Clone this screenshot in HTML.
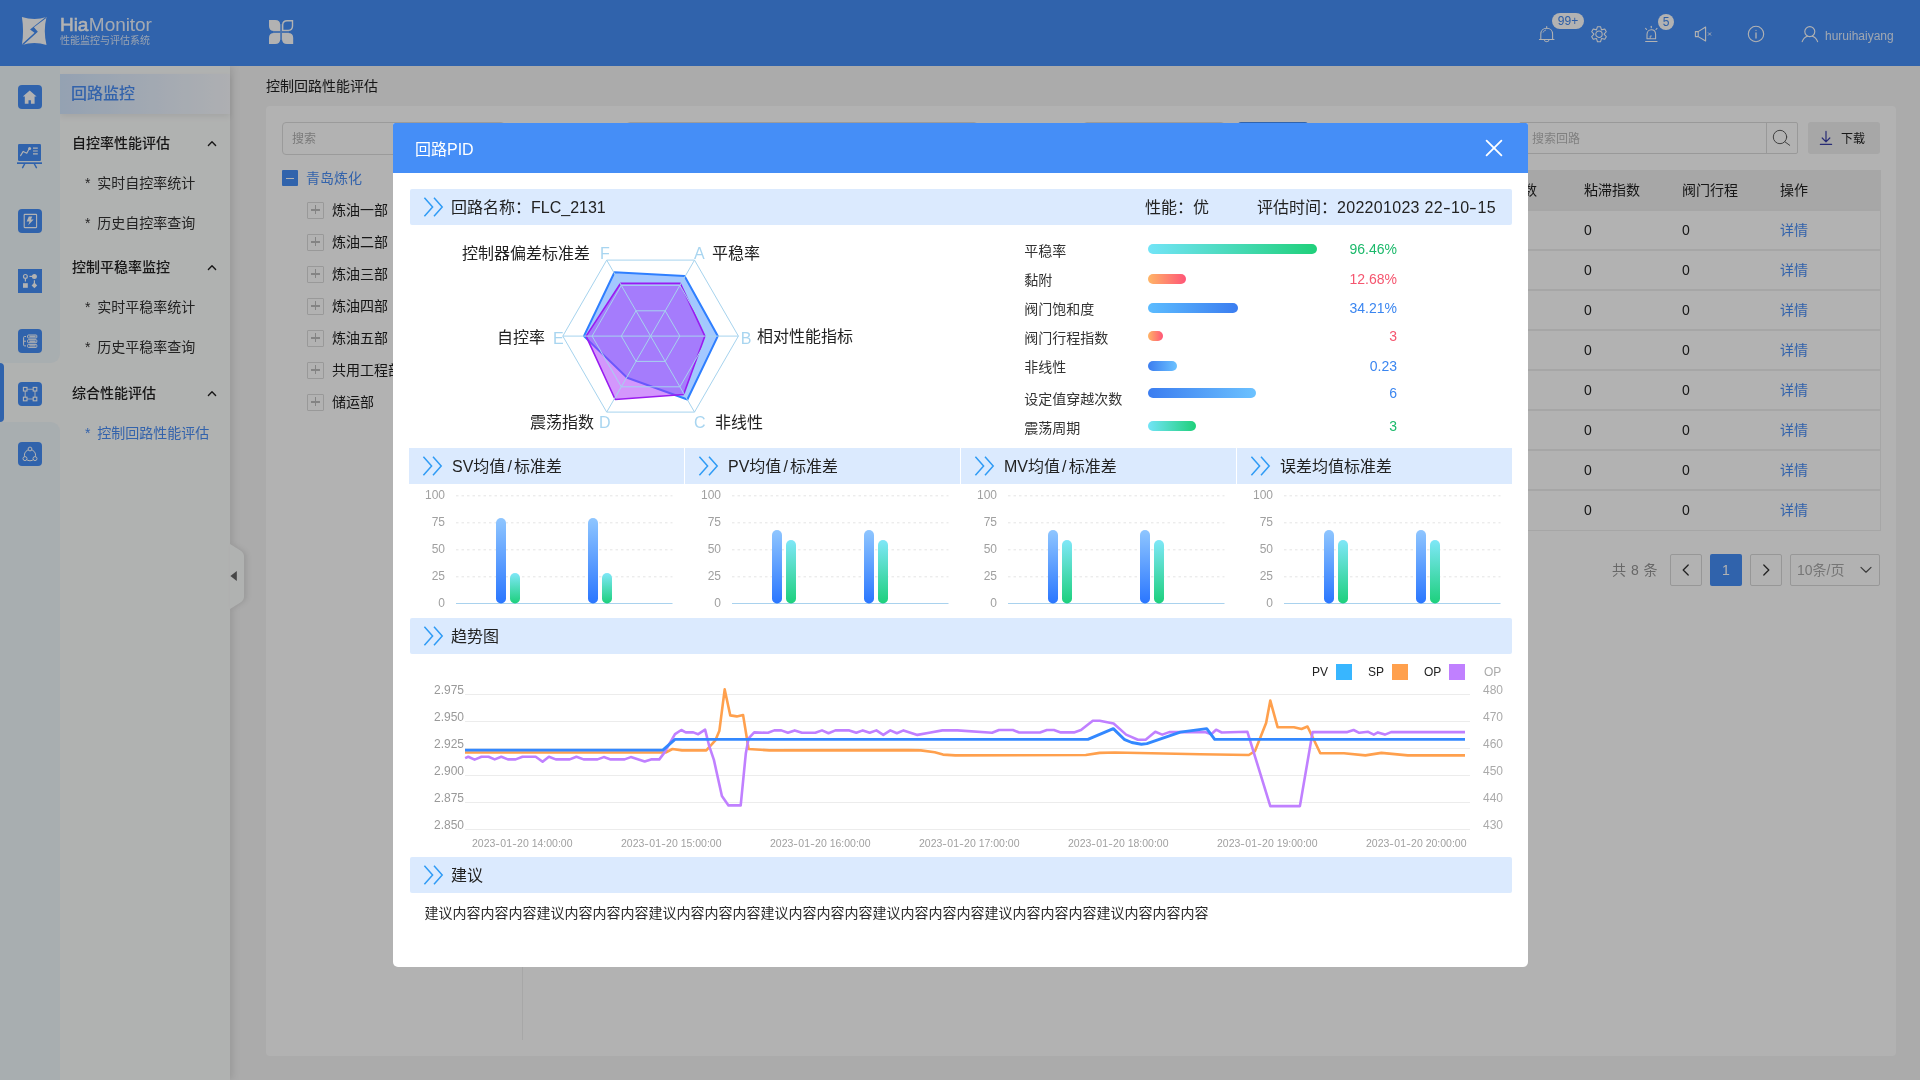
<!DOCTYPE html>
<html lang="zh-CN"><head><meta charset="utf-8"><title>HiaMonitor 控制回路性能评估</title><style>
*{box-sizing:border-box;margin:0;padding:0}
html,body{width:1920px;height:1080px;overflow:hidden;background:#f5f5f5;font-family:"Liberation Sans","Noto Sans CJK SC",sans-serif;}
#root{position:relative;width:1920px;height:1080px;overflow:hidden;background:#f5f5f5}
.t{position:absolute;white-space:nowrap}
.b{position:absolute}
svg{position:absolute;overflow:visible}
#root{will-change:transform}
#mask{position:absolute;left:0;top:0;width:1920px;height:1080px;background:rgba(0,0,0,0.3)}
</style></head><body><div id="root">
<div class="b" style="left:0px;top:0px;width:1920px;height:66px;background:#458ef7;"></div>
<svg style="left:22px;top:17px" width="25" height="29" viewBox="0 0 25 29">
<path d="M-0.1 -0.1 Q12.2 3.9 24.5 0.1 Q21.1 14 24.5 28 Q12.2 23.8 -0.1 28.1 Q2.2 14 -0.1 -0.1 Z" fill="#ffffff"/>
<path d="M23.7 -0.1 L8.05 12.5 L12.5 15.85 L-0.1 27.3 L0.9 28.2 L15.85 14.65 L11.95 10.15 L24.6 0.8 Z" fill="#458ef7"/>
</svg>
<div class="t" style="left:60px;top:13.1px;font-size:19px;line-height:24px;color:#fff;letter-spacing:-0.05px"><span style="-webkit-text-stroke:0.55px #fff">Hia</span><span style="opacity:.9;margin-left:0.5px">Monitor</span></div>
<div class="t " style="top:34.2px;font-size:10px;line-height:14px;color:rgba(255,255,255,.8);left:60.0px;">性能监控与评估系统</div>
<svg style="left:269px;top:20px" width="24" height="24" viewBox="0 0 24 24"><path d="M0 0 H6.199999999999999 Q11.2 0 11.2 5 V11 H5 Q0 11 0 6 V0 Z" fill="#fff"/><path d="M5 13 H11.2 V19 Q11.2 24 6.199999999999999 24 H0 V18 Q0 13 5 13 Z" fill="#fff"/><path d="M13 13 H19.2 Q24.2 13 24.2 18 V24 H18 Q13 24 13 19 V13 Z" fill="#fff"/><path d="M18.1 0.7 H23.5 V5.999999999999998 Q23.5 10.399999999999999 19.1 10.399999999999999 H13.7 V5.1000000000000005 Q13.7 0.7 18.1 0.7 Z" fill="none" stroke="#fff" stroke-width="1.4"/><path d="M4 12 H20 M12.1 4 V20" stroke="rgba(255,255,255,.22)" stroke-width="2"/></svg>
<svg style="left:1538px;top:25px" width="18" height="18" viewBox="0 0 18 18" fill="none" stroke="#fff" stroke-width="1.05" stroke-linecap="round" stroke-linejoin="round">
<path d="M2.8 14.3 V9.2 C2.8 5.6 5.4 3.2 8.7 3.2 C12 3.2 14.6 5.6 14.6 9.2 V14.3"/>
<path d="M1.4 14.4 H16"/>
<path d="M8.7 1.4 V3.1"/>
<path d="M6.4 15 C6.8 17.3 10.6 17.3 11 15"/>
<path d="M5.2 7.2 C5.7 6 6.6 5.4 7.6 5.1" stroke-width="0.9"/>
</svg>
<div class="b" style="left:1552px;top:13px;width:32px;height:16px;background:#fff;border-radius:8px;"></div>
<div class="t " style="top:13.0px;font-size:12px;line-height:16px;color:#3f86ee;left:0.0px;left:1552px;width:32px;text-align:center;">99+</div>
<svg style="left:1591.4px;top:25.8px" width="16" height="17" viewBox="0 0 16 17" fill="none" stroke="#fff" stroke-width="1.05" stroke-linejoin="round">
<path d="M6.46 0.65 L9.54 0.65 L10.50 3.87 L13.77 3.10 L15.30 5.76 L13.00 8.20 L15.30 10.64 L13.77 13.30 L10.50 12.53 L9.54 15.75 L6.46 15.75 L5.50 12.53 L2.23 13.30 L0.70 10.64 L3.00 8.20 L0.70 5.76 L2.23 3.10 L5.50 3.87 Z"/><circle cx="8" cy="8.2" r="3.2"/></svg>
<svg style="left:1643px;top:25px" width="18" height="18" viewBox="0 0 18 18" fill="none" stroke="#fff" stroke-width="1.1" stroke-linecap="round" stroke-linejoin="round">
<path d="M4 13.8 V9.6 C4 6.8 5.8 4.8 8.3 4.8 C10.8 4.8 12.6 6.8 12.6 9.6 V13.8 Z"/>
<path d="M2.6 16.5 H14"/>
<path d="M8.3 1.2 V2.8"/><path d="M2.6 3.4 L3.6 4.5"/><path d="M14 3.4 L13 4.5"/>
<path d="M7.2 13.4 V11 H8.4" stroke-width="0.9"/>
</svg>
<div class="b" style="left:1658px;top:14px;width:16px;height:16px;background:#fff;border-radius:8px;"></div>
<div class="t " style="top:14.0px;font-size:12px;line-height:16px;color:#3f86ee;left:0.0px;left:1658px;width:16px;text-align:center;">5</div>
<svg style="left:1694px;top:26px" width="19" height="16" viewBox="0 0 19 16" fill="none" stroke="#fff" stroke-width="1.1" stroke-linejoin="round" stroke-linecap="round">
<path d="M1.4 5.6 H4.2 V10.6 H1.4 Z"/>
<path d="M4.2 5.6 L11.6 1 V15 L4.2 10.6"/>
<path d="M14.4 6.8 L16.8 9.2 M16.8 6.8 L14.4 9.2" stroke-width="0.9"/>
</svg>
<svg style="left:1747px;top:25px" width="18" height="18" viewBox="0 0 18 18" fill="none" stroke="#fff" stroke-width="1.1" stroke-linecap="round">
<circle cx="9" cy="9" r="7.7"/><path d="M9 8 V13" stroke-width="1.3"/><circle cx="9" cy="5.3" r="0.6" fill="#fff" stroke="none"/>
</svg>
<svg style="left:1801px;top:25px" width="18" height="18" viewBox="0 0 18 18" fill="none" stroke="#fff" stroke-width="1.15" stroke-linecap="round">
<circle cx="8.8" cy="6.6" r="5"/><path d="M1.2 16.6 C2.4 13.4 4.6 11.8 6.4 11.2 M16.6 16.6 C15.4 13.4 13.2 11.8 11.4 11.2"/>
</svg>
<div class="t " style="top:28.4px;font-size:12px;line-height:16px;color:rgba(255,255,255,.85);left:1825.0px;">huruihaiyang</div>
<div class="b" style="left:60px;top:66px;width:170px;height:1014px;background:#fdfffe;box-shadow:2px 0 8px rgba(0,0,0,.12);clip-path:inset(0 -20px 0 0);"></div>
<div class="b" style="left:60px;top:74px;width:170px;height:40px;background:linear-gradient(90deg,#d5e8ff 0%,#f9fbff 100%);box-shadow:0 3px 6px rgba(0,0,0,.07);"></div>
<div class="t " style="top:82.5px;font-size:16px;line-height:22px;color:#4a8ef5;font-weight:500;left:71.0px;">回路监控</div>
<div class="t " style="top:133.0px;font-size:14px;line-height:20px;color:#222;font-weight:500;left:72.0px;">自控率性能评估</div>
<svg style="left:207px;top:139.5px" width="10" height="7" viewBox="0 0 10 7"><path d="M1.4 5.4 L5 1.8 L8.6 5.4" fill="none" stroke="#222" stroke-width="1.4" stroke-linecap="round" stroke-linejoin="round"/></svg>
<div class="t " style="top:257.0px;font-size:14px;line-height:20px;color:#222;font-weight:500;left:72.0px;">控制平稳率监控</div>
<svg style="left:207px;top:263.5px" width="10" height="7" viewBox="0 0 10 7"><path d="M1.4 5.4 L5 1.8 L8.6 5.4" fill="none" stroke="#222" stroke-width="1.4" stroke-linecap="round" stroke-linejoin="round"/></svg>
<div class="t " style="top:383.0px;font-size:14px;line-height:20px;color:#222;font-weight:500;left:72.0px;">综合性能评估</div>
<svg style="left:207px;top:389.5px" width="10" height="7" viewBox="0 0 10 7"><path d="M1.4 5.4 L5 1.8 L8.6 5.4" fill="none" stroke="#222" stroke-width="1.4" stroke-linecap="round" stroke-linejoin="round"/></svg>
<div class="t " style="top:173.0px;font-size:14px;line-height:20px;color:#333;left:85.0px;word-spacing:2.8px;">* 实时自控率统计</div>
<div class="t " style="top:213.0px;font-size:14px;line-height:20px;color:#333;left:85.0px;word-spacing:2.8px;">* 历史自控率查询</div>
<div class="t " style="top:297.0px;font-size:14px;line-height:20px;color:#333;left:85.0px;word-spacing:2.8px;">* 实时平稳率统计</div>
<div class="t " style="top:337.0px;font-size:14px;line-height:20px;color:#333;left:85.0px;word-spacing:2.8px;">* 历史平稳率查询</div>
<div class="t " style="top:423.0px;font-size:14px;line-height:20px;color:#4a8ef5;left:85.0px;word-spacing:2.8px;">* 控制回路性能评估</div>
<svg style="left:230px;top:544px;filter:drop-shadow(3px 0 2.5px rgba(0,0,0,.09))" width="16" height="66" viewBox="0 0 16 66"><path d="M0 0 L10 6.2 Q14 8.6 14 12.5 V52.5 Q14 56.4 10 58.8 L0 65 Z" fill="#fdfffe"/><path d="M6.8 27 V37 L0.4 32 Z" fill="#666"/></svg>
<div class="b" style="left:0px;top:66px;width:60px;height:1014px;background:#fdfffe;"></div>
<div class="b" style="left:0px;top:66px;width:60px;height:297px;background:#f1f9fd;border-bottom-right-radius:9px;"></div>
<div class="b" style="left:0px;top:422px;width:60px;height:658px;background:#f1f9fd;border-top-right-radius:9px;"></div>
<div class="b" style="left:0px;top:363px;width:60px;height:59px;background:#fdfffe;"></div>
<div class="b" style="left:0px;top:363px;width:4px;height:59px;background:#458ef7;border-radius:0 4px 4px 0;"></div>
<div class="b" style="left:18px;top:85px;width:24px;height:24px;background:#458ef7;border-radius:4px;"></div>
<svg style="left:18px;top:85px" width="24" height="24" viewBox="0 0 24 24"><path d="M11.7 5.6 L18.6 11.6 H16.6 V18.8 H12.9 V15.2 H10.5 V18.8 H6.8 V11.6 H4.8 Z" fill="#fff"/></svg>
<svg style="left:16px;top:142px" width="28" height="28" viewBox="0 0 28 28">
<rect x="2" y="2" width="23" height="17" rx="1.2" fill="#458ef7"/>
<rect x="1" y="20.3" width="25" height="1.7" fill="#458ef7"/>
<path d="M8.6 22 L6.6 25.6 M18.4 22 L20.4 25.6" stroke="#458ef7" stroke-width="1.5" stroke-linecap="round"/>
<path d="M4.6 13.6 L7.2 9.4 L10.8 11.2 L13.2 6.8" stroke="#fff" stroke-width="1.1" fill="none" stroke-linecap="round" stroke-linejoin="round"/>
<circle cx="13.6" cy="6.4" r="1.5" fill="#fff"/>
<path d="M17 6.2 H21.8 M17 9 H21.8 M17 11.8 H21.8" stroke="#fff" stroke-width="1.2"/>
</svg>
<div class="b" style="left:18px;top:209px;width:24px;height:24px;background:#458ef7;border-radius:4px;"></div>
<svg style="left:18px;top:209px" width="24" height="24" viewBox="0 0 24 24"><rect x="6.2" y="5.4" width="12.4" height="13.2" rx="0.6" fill="none" stroke="#fff" stroke-width="1.1"/>
<path d="M10.8 7.4 L8.6 12.5 H11.5 L10.2 16.3 L15.7 10.6 H12.9 L14.3 7.4 Z" fill="#fff"/></svg>
<div class="b" style="left:18px;top:269px;width:24px;height:24px;background:#458ef7;border-radius:0px;"></div>
<svg style="left:18px;top:269px" width="24" height="24" viewBox="0 0 24 24" fill="#fff">
<circle cx="7.4" cy="7.4" r="1.9" fill="none" stroke="#fff" stroke-width="1.2"/>
<path d="M7.4 9.4 V12.4" stroke="#fff" stroke-width="1.2"/>
<rect x="5" y="14.2" width="4.8" height="4.6"/>
<circle cx="16.4" cy="7.4" r="2.5"/>
<path d="M11.4 7.4 H15" stroke="#fff" stroke-width="1.2"/>
<path d="M16.4 11.2 V15" stroke="#fff" stroke-width="1.2"/>
<path d="M16.4 13.6 L19.2 16.4 L16.4 19.2 L13.6 16.4 Z"/>
</svg>
<div class="b" style="left:18px;top:329px;width:24px;height:24px;background:#458ef7;border-radius:4px;"></div>
<svg style="left:18px;top:329px" width="24" height="24" viewBox="0 0 24 24" fill="none" stroke="#fff" stroke-width="1">
<rect x="9.6" y="6" width="9.2" height="3" rx="0.8"/><rect x="9.6" y="10.7" width="9.2" height="3" rx="0.8"/><rect x="9.6" y="15.4" width="9.2" height="3" rx="0.8"/>
<path d="M11.4 7.5 H17.6 M11.4 12.2 H17.6 M11.4 16.9 H17.6" stroke-width="1.4" opacity=".85"/>
<path d="M8 7.5 H6.6 Q5.6 7.5 5.6 8.5 V15.9 Q5.6 16.9 6.6 16.9 H8 M5.6 12.2 H8"/>
</svg>
<div class="b" style="left:18px;top:382px;width:24px;height:24px;background:#458ef7;border-radius:4px;"></div>
<svg style="left:18px;top:382px" width="24" height="24" viewBox="0 0 24 24" fill="none" stroke="#fff" stroke-width="1.1">
<rect x="5.4" y="5.4" width="3.6" height="3.6"/><rect x="15.2" y="5.4" width="3.6" height="3.6"/><rect x="5.4" y="15.2" width="3.6" height="3.6"/><rect x="15.2" y="15.2" width="3.6" height="3.6"/>
<path d="M9 7.2 H15.2 M9 17 H15.2 M7.2 9 V15.2 M17 9 V15.2" opacity=".8"/>
</svg>
<div class="b" style="left:18px;top:442px;width:24px;height:24px;background:#458ef7;border-radius:4px;"></div>
<svg style="left:18px;top:442px" width="24" height="24" viewBox="0 0 24 24" fill="none" stroke="#fff" stroke-width="1">
<circle cx="12" cy="13.2" r="5.6"/><circle cx="12" cy="7" r="1.9" fill="#458ef7"/><circle cx="7" cy="16.6" r="2" fill="#458ef7"/><circle cx="17" cy="16.6" r="2" fill="#458ef7"/>
</svg>
<div class="t " style="top:76.0px;font-size:14px;line-height:20px;color:#222;left:266.0px;">控制回路性能评估</div>
<div class="b" style="left:266px;top:106px;width:1630px;height:950px;background:#fff;border-radius:4px;"></div>
<div class="b" style="left:281.5px;top:121.5px;width:223px;height:33px;border:1.5px solid #dedede;border-radius:4px;background:#fff;"></div>
<div class="t " style="top:131.2px;font-size:12px;line-height:16px;color:#b0b0b0;left:292.0px;">搜索</div>
<div class="b" style="left:626px;top:121.5px;width:352px;height:33px;border:1.5px solid #dedede;border-radius:4px;"></div>
<div class="b" style="left:1083px;top:121.5px;width:142px;height:33px;border:1.5px solid #dedede;border-radius:4px;"></div>
<div class="b" style="left:1238px;top:122px;width:70px;height:32px;background:#458ef7;border-radius:3px;"></div>
<div class="b" style="left:522px;top:170px;width:1px;height:870px;background:#f0f0f0;"></div>
<div class="b" style="left:282px;top:170px;width:16px;height:16px;background:#458ef7;border-radius:1px;"></div>
<div class="b" style="left:286px;top:177.5px;width:8px;height:1.2px;background:#fff;"></div>
<div class="t " style="top:168.0px;font-size:14px;line-height:20px;color:#4a8ef5;left:306.0px;">青岛炼化</div>
<div class="b" style="left:307px;top:201.5px;width:17px;height:17px;border:1.3px solid #dcdcdc;border-radius:1px;background:#fff;"></div>
<div class="b" style="left:311.4px;top:209.4px;width:8.4px;height:1.2px;background:#bdbdbd;"></div>
<div class="b" style="left:315px;top:205.4px;width:1.2px;height:8.4px;background:#bdbdbd;"></div>
<div class="t " style="top:200.0px;font-size:14px;line-height:20px;color:#222;left:332.0px;">炼油一部</div>
<div class="b" style="left:307px;top:233.5px;width:17px;height:17px;border:1.3px solid #dcdcdc;border-radius:1px;background:#fff;"></div>
<div class="b" style="left:311.4px;top:241.4px;width:8.4px;height:1.2px;background:#bdbdbd;"></div>
<div class="b" style="left:315px;top:237.4px;width:1.2px;height:8.4px;background:#bdbdbd;"></div>
<div class="t " style="top:232.0px;font-size:14px;line-height:20px;color:#222;left:332.0px;">炼油二部</div>
<div class="b" style="left:307px;top:265.5px;width:17px;height:17px;border:1.3px solid #dcdcdc;border-radius:1px;background:#fff;"></div>
<div class="b" style="left:311.4px;top:273.4px;width:8.4px;height:1.2px;background:#bdbdbd;"></div>
<div class="b" style="left:315px;top:269.4px;width:1.2px;height:8.4px;background:#bdbdbd;"></div>
<div class="t " style="top:264.0px;font-size:14px;line-height:20px;color:#222;left:332.0px;">炼油三部</div>
<div class="b" style="left:307px;top:297.5px;width:17px;height:17px;border:1.3px solid #dcdcdc;border-radius:1px;background:#fff;"></div>
<div class="b" style="left:311.4px;top:305.4px;width:8.4px;height:1.2px;background:#bdbdbd;"></div>
<div class="b" style="left:315px;top:301.4px;width:1.2px;height:8.4px;background:#bdbdbd;"></div>
<div class="t " style="top:296.0px;font-size:14px;line-height:20px;color:#222;left:332.0px;">炼油四部</div>
<div class="b" style="left:307px;top:329.5px;width:17px;height:17px;border:1.3px solid #dcdcdc;border-radius:1px;background:#fff;"></div>
<div class="b" style="left:311.4px;top:337.4px;width:8.4px;height:1.2px;background:#bdbdbd;"></div>
<div class="b" style="left:315px;top:333.4px;width:1.2px;height:8.4px;background:#bdbdbd;"></div>
<div class="t " style="top:328.0px;font-size:14px;line-height:20px;color:#222;left:332.0px;">炼油五部</div>
<div class="b" style="left:307px;top:361.5px;width:17px;height:17px;border:1.3px solid #dcdcdc;border-radius:1px;background:#fff;"></div>
<div class="b" style="left:311.4px;top:369.4px;width:8.4px;height:1.2px;background:#bdbdbd;"></div>
<div class="b" style="left:315px;top:365.4px;width:1.2px;height:8.4px;background:#bdbdbd;"></div>
<div class="t " style="top:360.0px;font-size:14px;line-height:20px;color:#222;left:332.0px;">共用工程部</div>
<div class="b" style="left:307px;top:393.5px;width:17px;height:17px;border:1.3px solid #dcdcdc;border-radius:1px;background:#fff;"></div>
<div class="b" style="left:311.4px;top:401.4px;width:8.4px;height:1.2px;background:#bdbdbd;"></div>
<div class="b" style="left:315px;top:397.4px;width:1.2px;height:8.4px;background:#bdbdbd;"></div>
<div class="t " style="top:392.0px;font-size:14px;line-height:20px;color:#222;left:332.0px;">储运部</div>
<div class="b" style="left:1519px;top:122px;width:279px;height:32px;border:1.3px solid #dcdcdc;border-radius:2px;"></div>
<div class="b" style="left:1765.8px;top:122px;width:1.3px;height:32px;background:#dcdcdc;"></div>
<div class="t " style="top:131.0px;font-size:12px;line-height:16px;color:#b8b8b8;left:1532.0px;">搜索回路</div>
<svg style="left:1770.8px;top:127.8px" width="20" height="20" viewBox="0 0 20 20" fill="none" stroke="#555" stroke-width="0.95" stroke-linecap="round"><circle cx="9" cy="9" r="6.7"/><path d="M13.9 13.8 L18.7 17.3"/></svg>
<div class="b" style="left:1808px;top:122px;width:72px;height:32px;background:#efefef;border-radius:3px;"></div>
<svg style="left:1818px;top:130px" width="16" height="16" viewBox="0 0 16 16" fill="none" stroke="#3a3fa8" stroke-width="1.2" stroke-linecap="round" stroke-linejoin="round"><path d="M8 1.4 V11.6 M4.2 8 L8 11.8 L11.8 8 M2.4 14.4 H13.6"/></svg>
<div class="t " style="top:130.6px;font-size:12px;line-height:16px;color:#222;left:1841.0px;">下载</div>
<div class="b" style="left:540px;top:169.5px;width:1340.5px;height:361.5px;border:1.5px solid #eee;background:#fff;"></div>
<div class="b" style="left:540px;top:169.5px;width:1340.5px;height:40.5px;background:#f0f0f0;"></div>
<div class="t " style="top:180.0px;font-size:14px;line-height:20px;color:#222;left:1509.0px;">指数</div>
<div class="t " style="top:180.0px;font-size:14px;line-height:20px;color:#222;left:1584.0px;">粘滞指数</div>
<div class="t " style="top:180.0px;font-size:14px;line-height:20px;color:#222;left:1682.0px;">阀门行程</div>
<div class="t " style="top:180.0px;font-size:14px;line-height:20px;color:#222;left:1780.0px;">操作</div>
<div class="b" style="left:540px;top:209.2px;width:1340px;height:1.8px;background:#eee;"></div>
<div class="t " style="top:220.0px;font-size:14px;line-height:20px;color:#222;left:1584.0px;">0</div>
<div class="t " style="top:220.0px;font-size:14px;line-height:20px;color:#222;left:1682.0px;">0</div>
<div class="t " style="top:220.0px;font-size:14px;line-height:20px;color:#4a8ef5;left:1780.0px;">详情</div>
<div class="b" style="left:540px;top:249.2px;width:1340px;height:1.8px;background:#eee;"></div>
<div class="t " style="top:260.0px;font-size:14px;line-height:20px;color:#222;left:1584.0px;">0</div>
<div class="t " style="top:260.0px;font-size:14px;line-height:20px;color:#222;left:1682.0px;">0</div>
<div class="t " style="top:260.0px;font-size:14px;line-height:20px;color:#4a8ef5;left:1780.0px;">详情</div>
<div class="b" style="left:540px;top:289.2px;width:1340px;height:1.8px;background:#eee;"></div>
<div class="t " style="top:300.0px;font-size:14px;line-height:20px;color:#222;left:1584.0px;">0</div>
<div class="t " style="top:300.0px;font-size:14px;line-height:20px;color:#222;left:1682.0px;">0</div>
<div class="t " style="top:300.0px;font-size:14px;line-height:20px;color:#4a8ef5;left:1780.0px;">详情</div>
<div class="b" style="left:540px;top:329.2px;width:1340px;height:1.8px;background:#eee;"></div>
<div class="t " style="top:340.0px;font-size:14px;line-height:20px;color:#222;left:1584.0px;">0</div>
<div class="t " style="top:340.0px;font-size:14px;line-height:20px;color:#222;left:1682.0px;">0</div>
<div class="t " style="top:340.0px;font-size:14px;line-height:20px;color:#4a8ef5;left:1780.0px;">详情</div>
<div class="b" style="left:540px;top:369.2px;width:1340px;height:1.8px;background:#eee;"></div>
<div class="t " style="top:380.0px;font-size:14px;line-height:20px;color:#222;left:1584.0px;">0</div>
<div class="t " style="top:380.0px;font-size:14px;line-height:20px;color:#222;left:1682.0px;">0</div>
<div class="t " style="top:380.0px;font-size:14px;line-height:20px;color:#4a8ef5;left:1780.0px;">详情</div>
<div class="b" style="left:540px;top:409.2px;width:1340px;height:1.8px;background:#eee;"></div>
<div class="t " style="top:420.0px;font-size:14px;line-height:20px;color:#222;left:1584.0px;">0</div>
<div class="t " style="top:420.0px;font-size:14px;line-height:20px;color:#222;left:1682.0px;">0</div>
<div class="t " style="top:420.0px;font-size:14px;line-height:20px;color:#4a8ef5;left:1780.0px;">详情</div>
<div class="b" style="left:540px;top:449.2px;width:1340px;height:1.8px;background:#eee;"></div>
<div class="t " style="top:460.0px;font-size:14px;line-height:20px;color:#222;left:1584.0px;">0</div>
<div class="t " style="top:460.0px;font-size:14px;line-height:20px;color:#222;left:1682.0px;">0</div>
<div class="t " style="top:460.0px;font-size:14px;line-height:20px;color:#4a8ef5;left:1780.0px;">详情</div>
<div class="b" style="left:540px;top:489.2px;width:1340px;height:1.8px;background:#eee;"></div>
<div class="t " style="top:500.0px;font-size:14px;line-height:20px;color:#222;left:1584.0px;">0</div>
<div class="t " style="top:500.0px;font-size:14px;line-height:20px;color:#222;left:1682.0px;">0</div>
<div class="t " style="top:500.0px;font-size:14px;line-height:20px;color:#4a8ef5;left:1780.0px;">详情</div>
<div class="t " style="top:560.0px;font-size:14px;line-height:20px;color:#959595;left:1612.0px;word-spacing:1px;">共 8 条</div>
<div class="b" style="left:1670px;top:554px;width:32px;height:32px;border:1px solid #d9d9d9;border-radius:2px;"></div>
<div class="b" style="left:1750px;top:554px;width:32px;height:32px;border:1px solid #d9d9d9;border-radius:2px;"></div>
<svg style="left:1680px;top:563px" width="12" height="14" viewBox="0 0 12 14"><path d="M8.2 2 L3.2 7 L8.2 12" fill="none" stroke="#333" stroke-width="1.3" stroke-linecap="round" stroke-linejoin="round"/></svg>
<svg style="left:1760px;top:563px" width="12" height="14" viewBox="0 0 12 14"><path d="M3.8 2 L8.8 7 L3.8 12" fill="none" stroke="#333" stroke-width="1.3" stroke-linecap="round" stroke-linejoin="round"/></svg>
<div class="b" style="left:1710px;top:554px;width:32px;height:32px;background:#458ef7;border-radius:2px;"></div>
<div class="t " style="top:560.0px;font-size:14px;line-height:20px;color:#fff;left:0.0px;left:1710px;width:32px;text-align:center;">1</div>
<div class="b" style="left:1790px;top:554px;width:90px;height:32px;border:1px solid #d9d9d9;border-radius:2px;"></div>
<div class="t " style="top:560.0px;font-size:14px;line-height:20px;color:#aaa;left:1797.0px;">10条/页</div>
<svg style="left:1859px;top:565px" width="14" height="10" viewBox="0 0 14 10"><path d="M2 2.4 L7 7.2 L12 2.4" fill="none" stroke="#555" stroke-width="1.2" stroke-linecap="round" stroke-linejoin="round"/></svg>
<div id="mask"></div>
<div class="b" style="left:393px;top:123px;width:1135px;height:843.7px;background:#fff;border-radius:2px 2px 5px 5px;"></div>
<div class="b" style="left:393px;top:123px;width:1135px;height:50px;background:#458ef7;border-radius:2px 2px 0 0;"></div>
<div class="t " style="top:139.3px;font-size:16px;line-height:22px;color:#fff;left:415.0px;">回路PID</div>
<svg style="left:1485px;top:139px" width="18" height="18" viewBox="0 0 18 18"><path d="M1.6 1.6 L16.4 16.4 M16.4 1.6 L1.6 16.4" stroke="#fff" stroke-width="1.8" stroke-linecap="round"/></svg>
<div class="b" style="left:410px;top:189px;width:1102px;height:36px;background:#dbeafe;border-radius:2px;"></div>
<svg style="left:423.5px;top:197.0px" width="20" height="20" viewBox="0 0 20 20" fill="none" stroke="#2f9bf5" stroke-width="1.5" stroke-linejoin="miter"><path d="M0.4 0.8 L8.6 10 L0.4 19.2"/><path d="M10 0.8 L18.2 10 L10 19.2"/></svg>
<div class="t " style="top:197.2px;font-size:16px;line-height:22px;color:#222;left:451.0px;">回路名称：FLC_2131</div>
<div class="t " style="top:197.2px;font-size:16px;line-height:22px;color:#222;left:1145.0px;">性能：优</div>
<div class="t " style="top:197.2px;font-size:16px;line-height:22px;color:#222;left:1257.0px;">评估时间：<span style="letter-spacing:.3px">202201023 22<span style="display:inline-block;width:8.05px;text-align:center;transform:scaleX(1.45)">-</span>10<span style="display:inline-block;width:8.05px;text-align:center;transform:scaleX(1.45)">-</span>15</span></div>
<svg style="left:0;top:0" width="1920" height="1080" viewBox="0 0 1920 1080"><polygon points="684.5,275.9 717.8,336.1 687.4,399.5 627.2,377.7 583.9,336.1 614.5,272.2" fill="rgba(51,133,255,.45)" stroke="#2f7fff" stroke-width="2" stroke-linejoin="round"/><polygon points="680.1,283.2 704.9,336.1 683.6,394.5 615.2,399.5 586.1,336.1 620.6,283.2" fill="rgba(168,48,250,.5)" stroke="#9a1cf0" stroke-width="1.6" stroke-linejoin="round"/><polygon points="665.2,310.8 679.9,336.1 665.2,361.4 636.0,361.4 621.3,336.1 636.0,310.8" fill="none" stroke="#a6d3ee" stroke-width="1"/><polygon points="679.9,285.4 709.1,336.1 679.9,386.8 621.3,386.8 592.1,336.1 621.3,285.4" fill="none" stroke="#a6d3ee" stroke-width="1"/><polygon points="694.5,260.1 738.4,336.1 694.5,412.1 606.7,412.1 562.8,336.1 606.7,260.1" fill="none" stroke="#a6d3ee" stroke-width="1"/><line x1="650.6" y1="336.1" x2="694.5" y2="260.1" stroke="#a6d3ee" stroke-width="1"/><line x1="650.6" y1="336.1" x2="738.4" y2="336.1" stroke="#a6d3ee" stroke-width="1"/><line x1="650.6" y1="336.1" x2="694.5" y2="412.1" stroke="#a6d3ee" stroke-width="1"/><line x1="650.6" y1="336.1" x2="606.7" y2="412.1" stroke="#a6d3ee" stroke-width="1"/><line x1="650.6" y1="336.1" x2="562.8" y2="336.1" stroke="#a6d3ee" stroke-width="1"/><line x1="650.6" y1="336.1" x2="606.7" y2="260.1" stroke="#a6d3ee" stroke-width="1"/></svg>
<div class="t " style="top:243.0px;font-size:16px;line-height:22px;color:#a8d5f0;left:600.0px;">F</div>
<div class="t " style="top:243.0px;font-size:16px;line-height:22px;color:#a8d5f0;left:694.0px;">A</div>
<div class="t " style="top:328.0px;font-size:16px;line-height:22px;color:#a8d5f0;left:740.7px;">B</div>
<div class="t " style="top:328.0px;font-size:16px;line-height:22px;color:#a8d5f0;left:553.0px;">E</div>
<div class="t " style="top:412.0px;font-size:16px;line-height:22px;color:#a8d5f0;left:599.0px;">D</div>
<div class="t " style="top:412.0px;font-size:16px;line-height:22px;color:#a8d5f0;left:694.0px;">C</div>
<div class="t " style="top:243.2px;font-size:16px;line-height:22px;color:#222;left:462.0px;">控制器偏差标准差</div>
<div class="t " style="top:243.2px;font-size:16px;line-height:22px;color:#222;left:712.0px;">平稳率</div>
<div class="t " style="top:326.2px;font-size:16px;line-height:22px;color:#222;left:757.0px;">相对性能指标</div>
<div class="t " style="top:327.2px;font-size:16px;line-height:22px;color:#222;left:497.0px;">自控率</div>
<div class="t " style="top:412.2px;font-size:16px;line-height:22px;color:#222;left:530.0px;">震荡指数</div>
<div class="t " style="top:412.2px;font-size:16px;line-height:22px;color:#222;left:715.0px;">非线性</div>
<div class="t " style="top:241.0px;font-size:14px;line-height:20px;color:#333;left:1024.3px;">平稳率</div>
<div class="b" style="left:1148px;top:244px;width:169px;height:10px;background:linear-gradient(90deg,#72e4f7,#1fd07a);border-radius:5px;"></div>
<div class="t " style="top:239.0px;font-size:14px;line-height:20px;color:#1cb96b;right:523.0px;text-align:right;">96.46%</div>
<div class="t " style="top:270.0px;font-size:14px;line-height:20px;color:#333;left:1024.3px;">黏附</div>
<div class="b" style="left:1148px;top:274px;width:38px;height:10px;background:linear-gradient(90deg,#ffb566,#ff5577);border-radius:5px;"></div>
<div class="t " style="top:269.0px;font-size:14px;line-height:20px;color:#f5566f;right:523.0px;text-align:right;">12.68%</div>
<div class="t " style="top:299.0px;font-size:14px;line-height:20px;color:#333;left:1024.3px;">阀门饱和度</div>
<div class="b" style="left:1148px;top:303px;width:90px;height:10px;background:linear-gradient(90deg,#5cbcff,#3b7df0);border-radius:5px;"></div>
<div class="t " style="top:298.0px;font-size:14px;line-height:20px;color:#3b86f0;right:523.0px;text-align:right;">34.21%</div>
<div class="t " style="top:328.0px;font-size:14px;line-height:20px;color:#333;left:1024.3px;">阀门行程指数</div>
<div class="b" style="left:1148px;top:331px;width:15px;height:10px;background:linear-gradient(90deg,#ffb566,#ff5577);border-radius:5px;"></div>
<div class="t " style="top:326.0px;font-size:14px;line-height:20px;color:#f5566f;right:523.0px;text-align:right;">3</div>
<div class="t " style="top:357.0px;font-size:14px;line-height:20px;color:#333;left:1024.3px;">非线性</div>
<div class="b" style="left:1148px;top:361px;width:29px;height:10px;background:linear-gradient(90deg,#3b7df0,#6cc2ff);border-radius:5px;"></div>
<div class="t " style="top:356.0px;font-size:14px;line-height:20px;color:#3b86f0;right:523.0px;text-align:right;">0.23</div>
<div class="t " style="top:389.0px;font-size:14px;line-height:20px;color:#333;left:1024.3px;">设定值穿越次数</div>
<div class="b" style="left:1148px;top:388px;width:108px;height:10px;background:linear-gradient(90deg,#3b7df0,#6cc2ff);border-radius:5px;"></div>
<div class="t " style="top:383.0px;font-size:14px;line-height:20px;color:#3b86f0;right:523.0px;text-align:right;">6</div>
<div class="t " style="top:418.0px;font-size:14px;line-height:20px;color:#333;left:1024.3px;">震荡周期</div>
<div class="b" style="left:1148px;top:421px;width:48px;height:10px;background:linear-gradient(90deg,#72e4f7,#1fd07a);border-radius:5px;"></div>
<div class="t " style="top:416.0px;font-size:14px;line-height:20px;color:#1cb96b;right:523.0px;text-align:right;">3</div>
<svg width="0" height="0" style="left:0;top:0"><defs>
<linearGradient id="gb" x1="0" y1="0" x2="0" y2="1"><stop offset="0" stop-color="#8fc6ff"/><stop offset="1" stop-color="#2a76ff"/></linearGradient>
<linearGradient id="gg" x1="0" y1="0" x2="0" y2="1"><stop offset="0" stop-color="#7fe7f8"/><stop offset="1" stop-color="#1dd07c"/></linearGradient>
</defs></svg>
<div class="b" style="left:409px;top:448px;width:275px;height:36px;background:#dbeafe;border-radius:0px;"></div>
<svg style="left:422.5px;top:456.0px" width="20" height="20" viewBox="0 0 20 20" fill="none" stroke="#2f9bf5" stroke-width="1.5" stroke-linejoin="miter"><path d="M0.4 0.8 L8.6 10 L0.4 19.2"/><path d="M10 0.8 L18.2 10 L10 19.2"/></svg>
<div class="t " style="top:456.2px;font-size:16px;line-height:22px;color:#222;left:452.0px;">SV均值<span style="padding:0 2.1px">/</span>标准差</div>
<svg style="left:409px;top:484px" width="276" height="130" viewBox="0 0 276 130"><line x1="47" y1="11.8" x2="263.5" y2="11.8" stroke="#e4e4e4" stroke-width="1" stroke-dasharray="2.5,3"/><line x1="47" y1="38.8" x2="263.5" y2="38.8" stroke="#e4e4e4" stroke-width="1" stroke-dasharray="2.5,3"/><line x1="47" y1="65.8" x2="263.5" y2="65.8" stroke="#e4e4e4" stroke-width="1" stroke-dasharray="2.5,3"/><line x1="47" y1="92.8" x2="263.5" y2="92.8" stroke="#e4e4e4" stroke-width="1" stroke-dasharray="2.5,3"/><line x1="47" y1="119.5" x2="263.5" y2="119.5" stroke="#a9d2ee" stroke-width="1.2"/><rect x="87" y="34" width="10" height="85.5" rx="5" fill="url(#gb)"/><rect x="101" y="89" width="10" height="30.5" rx="5" fill="url(#gg)"/><rect x="179" y="34" width="10" height="85.5" rx="5" fill="url(#gb)"/><rect x="193" y="89" width="10" height="30.5" rx="5" fill="url(#gg)"/></svg>
<div class="t " style="top:487.4px;font-size:12px;line-height:16px;color:#a0a0a0;right:1475.0px;text-align:right;">100</div>
<div class="t " style="top:514.4px;font-size:12px;line-height:16px;color:#a0a0a0;right:1475.0px;text-align:right;">75</div>
<div class="t " style="top:541.4px;font-size:12px;line-height:16px;color:#a0a0a0;right:1475.0px;text-align:right;">50</div>
<div class="t " style="top:568.4px;font-size:12px;line-height:16px;color:#a0a0a0;right:1475.0px;text-align:right;">25</div>
<div class="t " style="top:595.4px;font-size:12px;line-height:16px;color:#a0a0a0;right:1475.0px;text-align:right;">0</div>
<div class="b" style="left:685px;top:448px;width:275px;height:36px;background:#dbeafe;border-radius:0px;"></div>
<svg style="left:698.5px;top:456.0px" width="20" height="20" viewBox="0 0 20 20" fill="none" stroke="#2f9bf5" stroke-width="1.5" stroke-linejoin="miter"><path d="M0.4 0.8 L8.6 10 L0.4 19.2"/><path d="M10 0.8 L18.2 10 L10 19.2"/></svg>
<div class="t " style="top:456.2px;font-size:16px;line-height:22px;color:#222;left:728.0px;">PV均值<span style="padding:0 2.1px">/</span>标准差</div>
<svg style="left:685px;top:484px" width="276" height="130" viewBox="0 0 276 130"><line x1="47" y1="11.8" x2="263.5" y2="11.8" stroke="#e4e4e4" stroke-width="1" stroke-dasharray="2.5,3"/><line x1="47" y1="38.8" x2="263.5" y2="38.8" stroke="#e4e4e4" stroke-width="1" stroke-dasharray="2.5,3"/><line x1="47" y1="65.8" x2="263.5" y2="65.8" stroke="#e4e4e4" stroke-width="1" stroke-dasharray="2.5,3"/><line x1="47" y1="92.8" x2="263.5" y2="92.8" stroke="#e4e4e4" stroke-width="1" stroke-dasharray="2.5,3"/><line x1="47" y1="119.5" x2="263.5" y2="119.5" stroke="#a9d2ee" stroke-width="1.2"/><rect x="87" y="46" width="10" height="73.5" rx="5" fill="url(#gb)"/><rect x="101" y="56" width="10" height="63.5" rx="5" fill="url(#gg)"/><rect x="179" y="46" width="10" height="73.5" rx="5" fill="url(#gb)"/><rect x="193" y="56" width="10" height="63.5" rx="5" fill="url(#gg)"/></svg>
<div class="t " style="top:487.4px;font-size:12px;line-height:16px;color:#a0a0a0;right:1199.0px;text-align:right;">100</div>
<div class="t " style="top:514.4px;font-size:12px;line-height:16px;color:#a0a0a0;right:1199.0px;text-align:right;">75</div>
<div class="t " style="top:541.4px;font-size:12px;line-height:16px;color:#a0a0a0;right:1199.0px;text-align:right;">50</div>
<div class="t " style="top:568.4px;font-size:12px;line-height:16px;color:#a0a0a0;right:1199.0px;text-align:right;">25</div>
<div class="t " style="top:595.4px;font-size:12px;line-height:16px;color:#a0a0a0;right:1199.0px;text-align:right;">0</div>
<div class="b" style="left:961px;top:448px;width:275px;height:36px;background:#dbeafe;border-radius:0px;"></div>
<svg style="left:974.5px;top:456.0px" width="20" height="20" viewBox="0 0 20 20" fill="none" stroke="#2f9bf5" stroke-width="1.5" stroke-linejoin="miter"><path d="M0.4 0.8 L8.6 10 L0.4 19.2"/><path d="M10 0.8 L18.2 10 L10 19.2"/></svg>
<div class="t " style="top:456.2px;font-size:16px;line-height:22px;color:#222;left:1004.0px;">MV均值<span style="padding:0 2.1px">/</span>标准差</div>
<svg style="left:961px;top:484px" width="276" height="130" viewBox="0 0 276 130"><line x1="47" y1="11.8" x2="263.5" y2="11.8" stroke="#e4e4e4" stroke-width="1" stroke-dasharray="2.5,3"/><line x1="47" y1="38.8" x2="263.5" y2="38.8" stroke="#e4e4e4" stroke-width="1" stroke-dasharray="2.5,3"/><line x1="47" y1="65.8" x2="263.5" y2="65.8" stroke="#e4e4e4" stroke-width="1" stroke-dasharray="2.5,3"/><line x1="47" y1="92.8" x2="263.5" y2="92.8" stroke="#e4e4e4" stroke-width="1" stroke-dasharray="2.5,3"/><line x1="47" y1="119.5" x2="263.5" y2="119.5" stroke="#a9d2ee" stroke-width="1.2"/><rect x="87" y="46" width="10" height="73.5" rx="5" fill="url(#gb)"/><rect x="101" y="56" width="10" height="63.5" rx="5" fill="url(#gg)"/><rect x="179" y="46" width="10" height="73.5" rx="5" fill="url(#gb)"/><rect x="193" y="56" width="10" height="63.5" rx="5" fill="url(#gg)"/></svg>
<div class="t " style="top:487.4px;font-size:12px;line-height:16px;color:#a0a0a0;right:923.0px;text-align:right;">100</div>
<div class="t " style="top:514.4px;font-size:12px;line-height:16px;color:#a0a0a0;right:923.0px;text-align:right;">75</div>
<div class="t " style="top:541.4px;font-size:12px;line-height:16px;color:#a0a0a0;right:923.0px;text-align:right;">50</div>
<div class="t " style="top:568.4px;font-size:12px;line-height:16px;color:#a0a0a0;right:923.0px;text-align:right;">25</div>
<div class="t " style="top:595.4px;font-size:12px;line-height:16px;color:#a0a0a0;right:923.0px;text-align:right;">0</div>
<div class="b" style="left:1237px;top:448px;width:275px;height:36px;background:#dbeafe;border-radius:0px;"></div>
<svg style="left:1250.5px;top:456.0px" width="20" height="20" viewBox="0 0 20 20" fill="none" stroke="#2f9bf5" stroke-width="1.5" stroke-linejoin="miter"><path d="M0.4 0.8 L8.6 10 L0.4 19.2"/><path d="M10 0.8 L18.2 10 L10 19.2"/></svg>
<div class="t " style="top:456.2px;font-size:16px;line-height:22px;color:#222;left:1280.0px;">误差均值标准差</div>
<svg style="left:1237px;top:484px" width="276" height="130" viewBox="0 0 276 130"><line x1="47" y1="11.8" x2="263.5" y2="11.8" stroke="#e4e4e4" stroke-width="1" stroke-dasharray="2.5,3"/><line x1="47" y1="38.8" x2="263.5" y2="38.8" stroke="#e4e4e4" stroke-width="1" stroke-dasharray="2.5,3"/><line x1="47" y1="65.8" x2="263.5" y2="65.8" stroke="#e4e4e4" stroke-width="1" stroke-dasharray="2.5,3"/><line x1="47" y1="92.8" x2="263.5" y2="92.8" stroke="#e4e4e4" stroke-width="1" stroke-dasharray="2.5,3"/><line x1="47" y1="119.5" x2="263.5" y2="119.5" stroke="#a9d2ee" stroke-width="1.2"/><rect x="87" y="46" width="10" height="73.5" rx="5" fill="url(#gb)"/><rect x="101" y="56" width="10" height="63.5" rx="5" fill="url(#gg)"/><rect x="179" y="46" width="10" height="73.5" rx="5" fill="url(#gb)"/><rect x="193" y="56" width="10" height="63.5" rx="5" fill="url(#gg)"/></svg>
<div class="t " style="top:487.4px;font-size:12px;line-height:16px;color:#a0a0a0;right:647.0px;text-align:right;">100</div>
<div class="t " style="top:514.4px;font-size:12px;line-height:16px;color:#a0a0a0;right:647.0px;text-align:right;">75</div>
<div class="t " style="top:541.4px;font-size:12px;line-height:16px;color:#a0a0a0;right:647.0px;text-align:right;">50</div>
<div class="t " style="top:568.4px;font-size:12px;line-height:16px;color:#a0a0a0;right:647.0px;text-align:right;">25</div>
<div class="t " style="top:595.4px;font-size:12px;line-height:16px;color:#a0a0a0;right:647.0px;text-align:right;">0</div>
<div class="b" style="left:410px;top:618.3px;width:1102px;height:35.7px;background:#dbeafe;border-radius:2px;"></div>
<svg style="left:423.5px;top:626.15px" width="20" height="20" viewBox="0 0 20 20" fill="none" stroke="#2f9bf5" stroke-width="1.5" stroke-linejoin="miter"><path d="M0.4 0.8 L8.6 10 L0.4 19.2"/><path d="M10 0.8 L18.2 10 L10 19.2"/></svg>
<div class="t " style="top:626.4px;font-size:16px;line-height:22px;color:#222;left:451.0px;">趋势图</div>
<div class="t " style="top:664.0px;font-size:12px;line-height:16px;color:#222;left:1312.0px;">PV</div>
<div class="b" style="left:1336px;top:664px;width:16px;height:16px;background:#38b6ff;"></div>
<div class="t " style="top:664.0px;font-size:12px;line-height:16px;color:#222;left:1368.0px;">SP</div>
<div class="b" style="left:1392px;top:664px;width:16px;height:16px;background:#ffa04d;"></div>
<div class="t " style="top:664.0px;font-size:12px;line-height:16px;color:#222;left:1424.0px;">OP</div>
<div class="b" style="left:1449px;top:664px;width:16px;height:16px;background:#c080ff;"></div>
<div class="t " style="top:664.0px;font-size:12px;line-height:16px;color:#aaa;left:1484.0px;">OP</div>
<svg style="left:0;top:0" width="1920" height="1080" viewBox="0 0 1920 1080" fill="none"><line x1="465" y1="694.5" x2="1470" y2="694.5" stroke="#ececec" stroke-width="1"/><line x1="465" y1="721.5" x2="1470" y2="721.5" stroke="#ececec" stroke-width="1"/><line x1="465" y1="748.5" x2="1470" y2="748.5" stroke="#ececec" stroke-width="1"/><line x1="465" y1="775.5" x2="1470" y2="775.5" stroke="#ececec" stroke-width="1"/><line x1="465" y1="802.5" x2="1470" y2="802.5" stroke="#ececec" stroke-width="1"/><line x1="465" y1="829.5" x2="1470" y2="829.5" stroke="#ececec" stroke-width="1"/><polyline points="465.0,752.5 665.6,752.5 672.5,749.0 682.0,750.4 706.3,750.4 715.3,740.4 719.4,730.7 724.7,689.4 730.3,715.4 736.8,716.4 743.1,715.1 748.6,749.0 769.4,750.4 908.3,750.1 920.8,750.4 934.7,752.2 943.0,754.6 955.3,755.4 1085.8,755.0 1099.7,752.9 1115.0,752.5 1200.0,754.3 1248.8,755.0 1255.0,751.1 1266.1,723.1 1270.3,700.6 1277.6,727.2 1293.9,727.2 1301.5,729.0 1307.5,726.5 1320.3,753.2 1343.9,753.2 1365.4,755.4 1381.4,752.9 1407.8,755.4 1465.0,755.4" stroke="#ffa04d" stroke-width="2.6" stroke-linejoin="round"/><polyline points="465.1,758.1 468.3,756.7 474.6,759.6 481.5,756.8 488.5,756.8 494.7,759.4 501.3,756.7 507.9,759.4 515.6,759.4 522.5,756.7 535.7,756.7 542.6,761.7 548.9,756.7 555.8,759.4 569.7,759.4 576.4,756.7 583.6,759.4 597.5,759.4 603.8,757.1 610.7,759.4 624.6,759.4 630.8,757.1 637.8,759.2 644.7,761.5 651.0,759.4 659.3,759.4 664.2,752.9 675.0,734.2 681.3,730.0 685.7,732.4 693.3,732.4 698.2,734.2 705.1,729.6 709.0,745.3 713.9,759.9 721.9,796.0 728.5,805.4 740.7,805.4 745.8,753.6 748.6,738.3 754.2,732.4 768.0,732.8 774.3,730.4 781.3,730.4 787.9,732.8 794.7,730.4 802.0,732.8 815.3,732.8 822.0,730.4 828.5,733.2 835.4,730.4 849.3,730.4 856.3,732.8 862.8,730.4 869.7,732.8 876.4,730.4 883.3,734.9 890.3,730.4 896.9,733.2 903.5,730.4 917.4,734.9 929.2,732.8 942.4,730.4 957.4,730.4 992.1,732.8 999.0,730.0 1012.9,730.0 1019.2,732.5 1040.0,732.5 1046.9,730.0 1053.9,730.0 1060.8,732.4 1074.0,732.4 1081.0,730.0 1092.8,720.7 1099.7,720.7 1113.6,723.5 1126.1,734.6 1137.9,739.7 1145.6,739.7 1155.3,731.8 1162.2,734.6 1169.2,732.1 1205.0,732.1 1211.3,734.2 1216.1,729.7 1221.7,732.5 1247.4,731.8 1270.3,806.1 1299.9,806.1 1312.6,732.1 1347.4,732.1 1353.6,730.0 1359.2,732.8 1368.2,731.8 1373.8,734.6 1377.9,732.4 1384.9,734.6 1391.1,732.1 1465.0,732.1" stroke="#c080ff" stroke-width="2.6" stroke-linejoin="round"/><polyline points="465.0,750.1 662.8,750.1 675.0,739.4 1087.9,739.4 1113.3,728.6 1124.7,739.7 1131.7,742.5 1141.4,744.2 1146.9,743.6 1180.3,732.1 1206.7,728.6 1214.7,739.4 1465.0,739.4" stroke="#3388ff" stroke-width="2.9" stroke-linejoin="round"/></svg>
<div class="t " style="top:682.0px;font-size:12px;line-height:16px;color:#999;right:1456.0px;text-align:right;">2.975</div>
<div class="t " style="top:709.0px;font-size:12px;line-height:16px;color:#999;right:1456.0px;text-align:right;">2.950</div>
<div class="t " style="top:736.0px;font-size:12px;line-height:16px;color:#999;right:1456.0px;text-align:right;">2.925</div>
<div class="t " style="top:763.0px;font-size:12px;line-height:16px;color:#999;right:1456.0px;text-align:right;">2.900</div>
<div class="t " style="top:790.0px;font-size:12px;line-height:16px;color:#999;right:1456.0px;text-align:right;">2.875</div>
<div class="t " style="top:817.0px;font-size:12px;line-height:16px;color:#999;right:1456.0px;text-align:right;">2.850</div>
<div class="t " style="top:682.0px;font-size:12px;line-height:16px;color:#aaa;left:1483.0px;">480</div>
<div class="t " style="top:709.0px;font-size:12px;line-height:16px;color:#aaa;left:1483.0px;">470</div>
<div class="t " style="top:736.0px;font-size:12px;line-height:16px;color:#aaa;left:1483.0px;">460</div>
<div class="t " style="top:763.0px;font-size:12px;line-height:16px;color:#aaa;left:1483.0px;">450</div>
<div class="t " style="top:790.0px;font-size:12px;line-height:16px;color:#aaa;left:1483.0px;">440</div>
<div class="t " style="top:817.0px;font-size:12px;line-height:16px;color:#aaa;left:1483.0px;">430</div>
<div class="t " style="top:835.6px;font-size:10.5px;line-height:14px;color:#a0a0a0;left:472.0px;">2023<span style="display:inline-block;width:5px;text-align:center;transform:scaleX(1.3)">-</span>01<span style="display:inline-block;width:5px;text-align:center;transform:scaleX(1.3)">-</span>20 14:00:00</div>
<div class="t " style="top:836.3px;font-size:10.5px;line-height:14px;color:#a0a0a0;left:621.0px;">2023<span style="display:inline-block;width:5px;text-align:center;transform:scaleX(1.3)">-</span>01<span style="display:inline-block;width:5px;text-align:center;transform:scaleX(1.3)">-</span>20 15:00:00</div>
<div class="t " style="top:836.3px;font-size:10.5px;line-height:14px;color:#a0a0a0;left:770.0px;">2023<span style="display:inline-block;width:5px;text-align:center;transform:scaleX(1.3)">-</span>01<span style="display:inline-block;width:5px;text-align:center;transform:scaleX(1.3)">-</span>20 16:00:00</div>
<div class="t " style="top:836.3px;font-size:10.5px;line-height:14px;color:#a0a0a0;left:919.0px;">2023<span style="display:inline-block;width:5px;text-align:center;transform:scaleX(1.3)">-</span>01<span style="display:inline-block;width:5px;text-align:center;transform:scaleX(1.3)">-</span>20 17:00:00</div>
<div class="t " style="top:836.3px;font-size:10.5px;line-height:14px;color:#a0a0a0;left:1068.0px;">2023<span style="display:inline-block;width:5px;text-align:center;transform:scaleX(1.3)">-</span>01<span style="display:inline-block;width:5px;text-align:center;transform:scaleX(1.3)">-</span>20 18:00:00</div>
<div class="t " style="top:836.3px;font-size:10.5px;line-height:14px;color:#a0a0a0;left:1217.0px;">2023<span style="display:inline-block;width:5px;text-align:center;transform:scaleX(1.3)">-</span>01<span style="display:inline-block;width:5px;text-align:center;transform:scaleX(1.3)">-</span>20 19:00:00</div>
<div class="t " style="top:836.3px;font-size:10.5px;line-height:14px;color:#a0a0a0;left:1366.0px;">2023<span style="display:inline-block;width:5px;text-align:center;transform:scaleX(1.3)">-</span>01<span style="display:inline-block;width:5px;text-align:center;transform:scaleX(1.3)">-</span>20 20:00:00</div>
<div class="b" style="left:410px;top:857px;width:1102px;height:35.5px;background:#dbeafe;border-radius:2px;"></div>
<svg style="left:423.5px;top:864.75px" width="20" height="20" viewBox="0 0 20 20" fill="none" stroke="#2f9bf5" stroke-width="1.5" stroke-linejoin="miter"><path d="M0.4 0.8 L8.6 10 L0.4 19.2"/><path d="M10 0.8 L18.2 10 L10 19.2"/></svg>
<div class="t " style="top:865.0px;font-size:16px;line-height:22px;color:#222;left:451.0px;">建议</div>
<div class="t " style="top:903.0px;font-size:14px;line-height:20px;color:#2a2a2a;left:424.4px;">建议内容内容内容建议内容内容内容建议内容内容内容建议内容内容内容建议内容内容内容建议内容内容内容建议内容内容内容</div>
</div></body></html>
